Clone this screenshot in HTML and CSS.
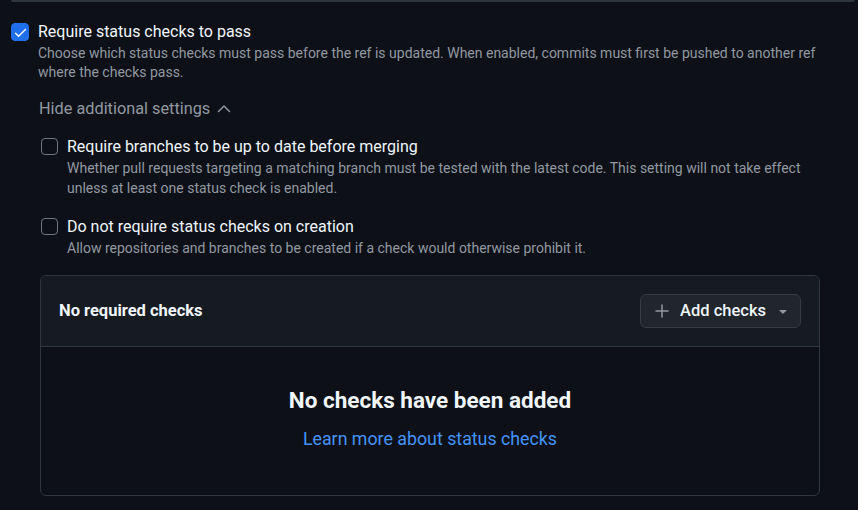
FILE: index.html
```html
<!DOCTYPE html>
<html lang="en">
<head>
<meta charset="utf-8">
<title>Status checks</title>
<link rel="stylesheet" href="styles.css">
</head>
<body>
<div class="topline"></div>
<div class="setting main">
  <span class="cb checked">
    <svg viewBox="0 0 16 16" width="15" height="15"><path d="M13.78 4.22a.75.75 0 0 1 0 1.06l-7.25 7.25a.75.75 0 0 1-1.06 0L2.22 9.28a.751.751 0 0 1 .018-1.042.751.751 0 0 1 1.042-.018L6 10.94l6.72-6.72a.75.75 0 0 1 1.06 0Z" fill="#ffffff"/></svg>
  </span>
  <div class="text">
    <div class="title">Require status checks to pass</div>
    <div class="desc">Choose which status checks must pass before the ref is updated. When enabled, commits must first be pushed to another ref where the checks pass.</div>
  </div>
</div>
<div class="sub">
  <div class="toggle">Hide additional settings
    <svg viewBox="0 0 16 16" width="16" height="16"><path d="M2.5 10.5 8 5 13.5 10.5" fill="none" stroke="#9198a1" stroke-width="1.5" stroke-linecap="round" stroke-linejoin="round"/></svg>
  </div>
  <div class="setting opt first">
    <span class="cb"></span>
    <div class="text">
      <div class="title">Require branches to be up to date before merging</div>
      <div class="desc">Whether pull requests targeting a matching branch must be tested with the latest code. This setting will not take effect unless at least one status check is enabled.</div>
    </div>
  </div>
  <div class="setting opt second">
    <span class="cb"></span>
    <div class="text">
      <div class="title">Do not require status checks on creation</div>
      <div class="desc">Allow repositories and branches to be created if a check would otherwise prohibit it.</div>
    </div>
  </div>
  <div class="box">
    <div class="box-head">
      <span class="box-title">No required checks</span>
      <button class="btn">
        <svg viewBox="0 0 16 16" width="16" height="16"><path d="M8 2v12M2 8h12" stroke="#9198a1" stroke-width="1.5" stroke-linecap="round" fill="none"/></svg>
        <span>Add checks</span>
        <svg viewBox="0 0 16 16" width="16" height="16"><path d="m4.427 7.427 3.396 3.396a.25.25 0 0 0 .354 0l3.396-3.396A.25.25 0 0 0 11.396 7H4.604a.25.25 0 0 0-.177.427Z" fill="#9198a1"/></svg>
      </button>
    </div>
    <div class="box-body">
      <h3 class="empty-title">No checks have been added</h3>
      <a class="link" href="#">Learn more about status checks</a>
    </div>
  </div>
</div>
</body>
</html>
```

FILE: styles.css
```css
html, body {
  margin: 0;
  padding: 0;
  background: #0d1117;
}
body {
  font-family: Roboto, "Liberation Sans", sans-serif;
  color: #e6edf3;
  width: 858px;
  height: 510px;
  overflow: hidden;
}
.topline {
  height: 2px;
  margin: 0 3px 0 11px;
  background: #30363d;
  border-radius: 0 0 4px 4px;
}
.setting {
  display: flex;
  align-items: flex-start;
  gap: 9px;
}
.main {
  margin-top: 20px;
  padding-left: 11px;
  padding-right: 30px;
}
.main .cb {
  width: 18px;
  height: 18px;
  margin-top: 1px;
}
.cb {
  flex: none;
  box-sizing: border-box;
  width: 17px;
  height: 17px;
  margin-top: 1px;
  border: 1px solid #6e7681;
  border-radius: 4px;
  display: flex;
  align-items: center;
  justify-content: center;
}
.cb.checked {
  background: #1f6feb;
  border-color: #1f6feb;
}
.title {
  font-size: 16px;
  line-height: 20px;
  color: #f0f6fc;
}
.desc {
  margin-top: 1px;
  font-size: 14px;
  line-height: 20px;
  color: #9198a1;
}
.main .desc {
  line-height: 19px;
  margin-top: 1.5px;
}
.sub {
  margin-left: 38px;
  margin-right: 38px;
}
.toggle {
  margin-top: 15px;
  display: flex;
  align-items: center;
  gap: 6px;
  font-size: 16.3px;
  line-height: 24px;
  color: #9198a1;
  margin-left: 1px;
}
.opt .cb {
  margin-left: 3px;
}
.opt.first {
  margin-top: 16px;
}
.opt.second {
  margin-top: 19px;
}
.box {
  margin-top: 17px;
  margin-left: 2px;
  border: 1px solid #30363d;
  border-radius: 6px;
  overflow: hidden;
}
.box-head {
  display: flex;
  align-items: center;
  justify-content: space-between;
  padding: 18px 18px 18px 18px;
  background: #161b22;
  border-bottom: 1px solid #30363d;
}
.box-title {
  font-size: 16.5px;
  font-weight: 700;
  color: #f0f6fc;
}
.btn {
  display: flex;
  align-items: center;
  gap: 9px;
  height: 34px;
  box-sizing: border-box;
  padding: 0 9px 0 13px;
  background: #21262d;
  border: 1px solid #363b42;
  border-radius: 6px;
  font-family: inherit;
  font-size: 16.5px;
  font-weight: 500;
  color: #f0f6fc;
}
.btn span {
  margin-left: 1px;
}
.box-body {
  display: flex;
  flex-direction: column;
  align-items: center;
  padding: 38px 0 43px;
}
.empty-title {
  margin: 0;
  font-size: 22.5px;
  line-height: 30px;
  font-weight: 700;
  color: #f0f6fc;
}
.link {
  margin-top: 11px;
  font-size: 17.8px;
  line-height: 26px;
  color: #4493f8;
  text-decoration: none;
}
```
